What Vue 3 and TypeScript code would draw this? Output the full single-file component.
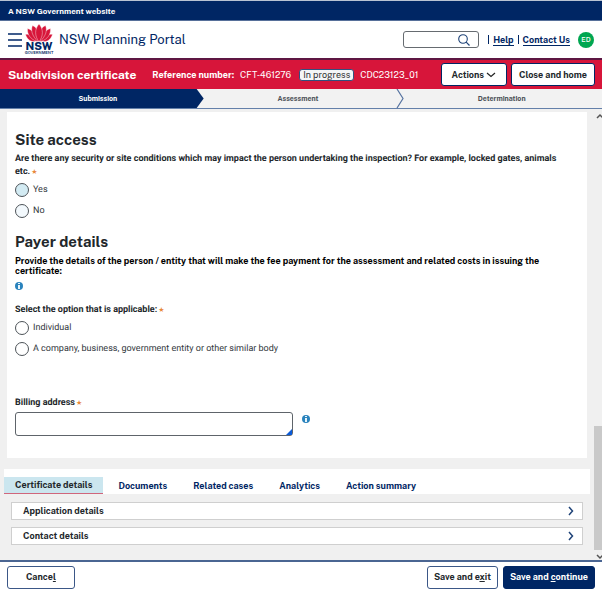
<script setup lang="ts">
import { ref } from 'vue'

interface Option {
  value: string
  label: string
}

const steps: string[] = ['Submission', 'Assessment', 'Determination']
const accessOptions: Option[] = [
  { value: 'yes', label: 'Yes' },
  { value: 'no', label: 'No' },
]
const payerOptions: Option[] = [
  { value: 'individual', label: 'Individual' },
  { value: 'company', label: 'A company, business, government entity or other similar body' },
]
const tabs: string[] = ['Certificate details', 'Documents', 'Related cases', 'Analytics', 'Action summary']
const sections: string[] = ['Application details', 'Contact details']

const search = ref('')
const access = ref('')
const payer = ref('')
const billingAddress = ref('')
const activeTab = ref(tabs[0])
</script>

<template>
  <div class="page">
    <div class="masthead">A NSW Government website</div>

    <header class="header">
      <button class="menu" type="button" aria-label="Menu"><i></i><i></i><i></i></button>
      <div class="logo">
        <svg viewBox="0 0 28 18" width="28" height="18" aria-hidden="true">
          <g fill="#d7153a" stroke="#fff" stroke-width="0.400">
            <path d="M10 17.500C5 18 2 15 0.500 10.500c4-1 8 2 10.500 6z" />
            <path d="M18 17.500c5 0.500 8-2.500 9.500-7-4-1-8 2-10.500 6z" />
            <path d="M12 17.500C5 15 2 10 2.500 4.500 8 6 11 11 13 16.500z" />
            <path d="M16 17.500c7-2.500 10-7.500 9.500-13C20 6 17 11 15 16.500z" />
            <path d="M13 17.500C7 12 5.500 6 7.500 1.500c5 2 7 8.500 7 15z" />
            <path d="M15 17.500c6-5.500 7.500-11.500 5.500-16-5 2-7 8.500-7 15z" />
            <path d="M14 17.800C9.500 12 9.500 5 14 0c4.500 5 4.500 12 0 17.800z" />
          </g>
        </svg>
        <b>NSW</b>
        <small>GOVERNMENT</small>
      </div>
      <span class="portal">NSW Planning Portal</span>
      <div class="search">
        <input v-model="search" type="text" aria-label="Search" />
        <svg viewBox="0 0 12 12" width="12" height="12" aria-hidden="true">
          <circle cx="5" cy="5" r="4.300" fill="none" stroke="#1f4378" stroke-width="1.100" />
          <path d="M8.200 8.200l3.300 3.300" stroke="#1f4378" stroke-width="1.200" />
        </svg>
      </div>
      <nav class="links">
        <i class="bar"></i><a href="#help">Help</a>
        <i class="bar"></i><a href="#contact">Contact Us</a>
      </nav>
      <span class="avatar">ED</span>
    </header>

    <div class="case">
      <h1>Subdivision certificate</h1>
      <div class="refs">
        <b>Reference number:</b>
        <span>CFT-461276</span>
        <span class="status">In progress</span>
        <span>CDC23123_01</span>
      </div>
      <div class="case-actions">
        <button class="btn" type="button">
          Actions
          <svg viewBox="0 0 10 6" width="10" height="6" aria-hidden="true">
            <path d="M1 1l4 3.500L9 1" fill="none" stroke="#222" stroke-width="1.200" />
          </svg>
        </button>
        <button class="btn" type="button">Close and home</button>
      </div>
    </div>

    <ol class="steps">
      <li v-for="(step, i) in steps" :key="step" :class="{ current: i === 0, next: i === 1 }">
        {{ step }}
        <svg v-if="i === 1" viewBox="0 0 8 19" width="8" height="19" aria-hidden="true">
          <path d="M1 0l6 9.500L1 19" fill="none" stroke="#5673a0" stroke-width="1.200" />
        </svg>
      </li>
    </ol>

    <div class="body">
      <main class="content">
        <form class="panel" @submit.prevent>
          <h2>Site access</h2>
          <fieldset>
            <legend>
              Are there any security or site conditions which may impact the person undertaking the inspection? For example, locked gates, animals etc.<span class="req">★</span>
            </legend>
            <label v-for="o in accessOptions" :key="o.value" class="radio" :class="o.value">
              <input v-model="access" type="radio" name="access" :value="o.value" />{{ o.label }}
            </label>
          </fieldset>

          <h2 class="payer">Payer details</h2>
          <p class="intro">
            Provide the details of the person / entity that will make the fee payment for the assessment and related costs in issuing the certificate:
          </p>
          <svg class="info" viewBox="0 0 8 8" width="8" height="8" role="img" aria-label="Information">
            <circle cx="4" cy="4" r="4" fill="#2a83bd" />
            <path d="M3 1h2v1H3zM3 3h2v4H3z" fill="#e6f4fb" />
          </svg>
          <fieldset class="option">
            <legend>Select the option that is applicable:<span class="req">★</span></legend>
            <label v-for="o in payerOptions" :key="o.value" class="radio">
              <input v-model="payer" type="radio" name="payer" :value="o.value" />{{ o.label }}
            </label>
          </fieldset>

          <div class="billing">
            <label for="billing">Billing address<span class="req">★</span></label>
            <div class="billing-row">
              <div class="field">
                <textarea id="billing" v-model="billingAddress" rows="1"></textarea>
                <i class="grip"></i>
              </div>
              <svg class="info" viewBox="0 0 8 8" width="8" height="8" role="img" aria-label="Information">
                <circle cx="4" cy="4" r="4" fill="#2a83bd" />
                <path d="M3 1h2v1H3zM3 3h2v4H3z" fill="#e6f4fb" />
              </svg>
            </div>
          </div>
        </form>

        <div class="tabs" role="tablist">
          <button
            v-for="tab in tabs"
            :key="tab"
            type="button"
            role="tab"
            :aria-selected="tab === activeTab"
            :class="{ active: tab === activeTab }"
            @click="activeTab = tab"
          >
            {{ tab }}
          </button>
        </div>

        <div class="sections">
          <button v-for="s in sections" :key="s" type="button">
            {{ s }}
            <svg viewBox="0 0 6 10" width="6" height="10" aria-hidden="true">
              <path d="M1 1l3.500 4L1 9" fill="none" stroke="#1f4378" stroke-width="1.500" />
            </svg>
          </button>
        </div>
      </main>

      <div class="scrollbar" aria-hidden="true">
        <svg viewBox="0 0 8 10" width="8" height="10"><path d="M3 7l3-3 3 3" fill="none" stroke="#555" stroke-width="1.500" /></svg>
        <div class="track"><div class="thumb"></div></div>
        <svg viewBox="0 0 8 10" width="8" height="10"><path d="M3 5l3 3 3-3" fill="none" stroke="#555" stroke-width="1.500" /></svg>
      </div>
    </div>

    <footer class="footer">
      <button class="btn cancel" type="button">Cance<u>l</u></button>
      <button class="btn" type="button">Save and e<u>x</u>it</button>
      <button class="btn primary" type="button">Save and <u>c</u>ontinue</button>
    </footer>
  </div>
</template>

<style>
body {
  margin: 0;
}
</style>

<style scoped>
* {
  box-sizing: border-box;
}
.page {
  display: flex;
  flex-direction: column;
  min-height: 100vh;
  font-family: 'Public Sans', Inter, 'Liberation Sans', sans-serif;
  font-size: 9px;
  line-height: 12px;
  color: #22272b;
  background: #fff;
}
button,
input,
textarea {
  font: inherit;
  color: inherit;
}
h1,
h2,
p,
ol,
fieldset {
  margin: 0;
  padding: 0;
  border: 0;
}
.masthead {
  padding: 4px 8px 3px;
  border-top: 1px solid #b9c3d3;
  border-bottom: 1px solid #57709a;
  background: #002664;
  color: #fff;
  font-size: 8px;
  font-weight: 700;
}
.header {
  display: flex;
  align-items: center;
  height: 37px;
  padding: 0 8px;
  color: #002664;
}
.menu {
  display: flex;
  flex-direction: column;
  gap: 4px;
  width: 14px;
  padding: 0;
  border: 0;
  background: none;
}
.menu i {
  height: 2px;
  background: #3f5c8d;
}
.logo {
  display: flex;
  flex-direction: column;
  align-items: center;
  width: 28px;
  margin-left: 3px;
}
.logo b {
  font-size: 11px;
  line-height: 9px;
  font-weight: 800;
}
.logo small {
  font-size: 4px;
  line-height: 4px;
  font-weight: 600;
}
.portal {
  margin-left: 6px;
  font-size: 13px;
  line-height: 18px;
}
.search {
  display: flex;
  align-items: center;
  width: 76px;
  height: 17px;
  margin-left: auto;
  padding-right: 8px;
  border: 1px solid #666b70;
  border-radius: 3px;
}
.search input {
  flex: 1;
  min-width: 0;
  border: 0;
  outline: 0;
  background: none;
}
.links {
  display: flex;
  align-items: center;
  gap: 4px;
  margin-left: 9px;
  font-weight: 700;
}
.links a {
  color: #002664;
  text-decoration: none;
  border-bottom: 1px solid #002664;
  line-height: 11px;
}
.bar {
  width: 1px;
  height: 9px;
  background: #002664;
}
.avatar {
  width: 16px;
  height: 16px;
  margin-left: 8px;
  border-radius: 50%;
  background: #00a651;
  color: #fff;
  font-size: 7px;
  font-weight: 500;
  line-height: 16px;
  text-align: center;
}
.case {
  display: flex;
  align-items: center;
  height: 31px;
  padding: 0 7px 0 8px;
  border-top: 2px solid #5d1643;
  background: #d7153a;
  color: #fff;
}
.case h1 {
  font-size: 12px;
  line-height: 16px;
  font-weight: 700;
}
.refs {
  display: flex;
  align-items: center;
  gap: 6px;
  margin-left: 16px;
}
.status {
  margin-left: 2px;
  padding: 0 3px;
  border: 1px solid #33507f;
  border-radius: 3px;
  background: #f4f5f7;
  color: #333;
  line-height: 10px;
}
.case-actions {
  display: flex;
  gap: 4px;
  margin-left: auto;
}
.btn {
  height: 23px;
  padding: 0 6px;
  border: 1px solid #3b5787;
  border-radius: 3px;
  background: #fff;
  color: #22272b;
  font-weight: 700;
  white-space: nowrap;
}
.case .btn {
  padding: 0 7px;
  border-color: #002664;
}
.case .btn:first-child {
  padding: 0 10px;
}
.btn u {
  text-underline-offset: 1px;
}
.steps {
  display: grid;
  grid-template-columns: repeat(3, 1fr);
  height: 20px;
  border-bottom: 1px solid #6480aa;
  background: #f2f2f2;
  list-style: none;
  color: #4a4f55;
  font-size: 7px;
  font-weight: 700;
  line-height: 19px;
  text-align: center;
}
.steps li {
  position: relative;
}
.steps svg {
  position: absolute;
  top: 0;
  right: -3px;
}
.steps .next {
  padding-right: 6px;
}
.steps .current {
  margin-right: -3px;
  padding-right: 8px;
  background: #002664;
  color: #fff;
  clip-path: polygon(0 0, calc(100% - 7px) 0, 100% 50%, calc(100% - 7px) 100%, 0 100%);
}
.body {
  display: flex;
  flex: 1;
  background: #f0f0f0;
}
.content {
  flex: 1;
  min-width: 0;
  padding: 3px 4px 12px;
}
.panel {
  margin: 0 3px;
  padding: 18px 8px 22px;
  background: #fff;
}
h2 {
  font-size: 15px;
  line-height: 20px;
  font-weight: 700;
}
.payer {
  margin-top: 14px;
}
legend,
.radio,
.billing label {
  font-family: Roboto, 'Liberation Sans', sans-serif;
  text-rendering: geometricPrecision;
}
legend {
  padding: 3px 0 0;
  line-height: 13px;
  font-weight: 700;
}
.req {
  margin-left: 1px;
  color: #e8893a;
  font-family: 'DejaVu Sans', sans-serif;
  font-size: 7px;
  line-height: 7px;
}
.radio {
  display: flex;
  align-items: center;
  gap: 4px;
  width: fit-content;
  height: 14px;
  margin-top: 7px;
  color: #33383d;
}
.radio input {
  appearance: none;
  width: 14px;
  height: 14px;
  margin: 0;
  border: 1px solid #4d5358;
  border-radius: 50%;
  background: #fff;
}
legend + .radio {
  margin-top: 4px;
}
.radio.yes input {
  background: #d3ebf3;
}
.radio.no input {
  background: #f3f9fd;
}
.radio input:checked {
  background: #002664;
}
.intro {
  margin-top: 4px;
  line-height: 10px;
  font-weight: 700;
  color: #000;
}
.info {
  display: block;
  margin-top: 6px;
}
.option {
  margin-top: 11px;
}
.billing {
  margin-top: 41px;
}
.billing label {
  display: block;
  font-weight: 700;
}
.billing-row {
  display: flex;
  gap: 9px;
  margin-top: 3px;
}
.billing-row .info {
  margin-top: 3px;
}
.field {
  position: relative;
  flex: 0 1 278px;
}
.field textarea {
  display: block;
  width: 100%;
  height: 24px;
  padding: 5px;
  border: 1px solid #5e646a;
  border-radius: 3px;
  resize: none;
}
.grip {
  position: absolute;
  right: 1px;
  bottom: 1px;
  width: 6px;
  height: 6px;
  background: #0b5bd8;
  clip-path: polygon(100% 0, 100% 100%, 0 100%);
}
.tabs {
  display: flex;
  gap: 4px;
  height: 25px;
  margin-top: 11px;
  padding-top: 8px;
  background: #fff;
}
.tabs button {
  padding: 0 11px;
  border: 0;
  background: none;
  color: #002664;
  font-weight: 700;
  white-space: nowrap;
}
.tabs .active {
  border-bottom: 1px solid #d0667c;
  background: #cbe6ef;
  color: #22272b;
}
.sections {
  display: flex;
  flex-direction: column;
  gap: 7px;
  padding: 8px 7px 0;
}
.sections button {
  display: flex;
  align-items: center;
  justify-content: space-between;
  height: 18px;
  padding: 0 8px 0 11px;
  border: 1px solid #cfcfcf;
  background: #fff;
  font-weight: 700;
}
.scrollbar {
  display: flex;
  flex-direction: column;
  width: 8px;
  padding-top: 2px;
}
.track {
  display: flex;
  flex-direction: column;
  justify-content: flex-end;
  flex: 1;
}
.thumb {
  height: 29%;
  background: #c9c9c9;
}
.footer {
  display: flex;
  align-items: center;
  gap: 5px;
  height: 30px;
  padding: 2px 7px 0;
  border-top: 2px solid #4a6592;
}
.cancel {
  padding: 0 18px;
  margin-right: auto;
}
.btn.primary {
  border-color: #002664;
  background: #002664;
  color: #fff;
}
</style>
